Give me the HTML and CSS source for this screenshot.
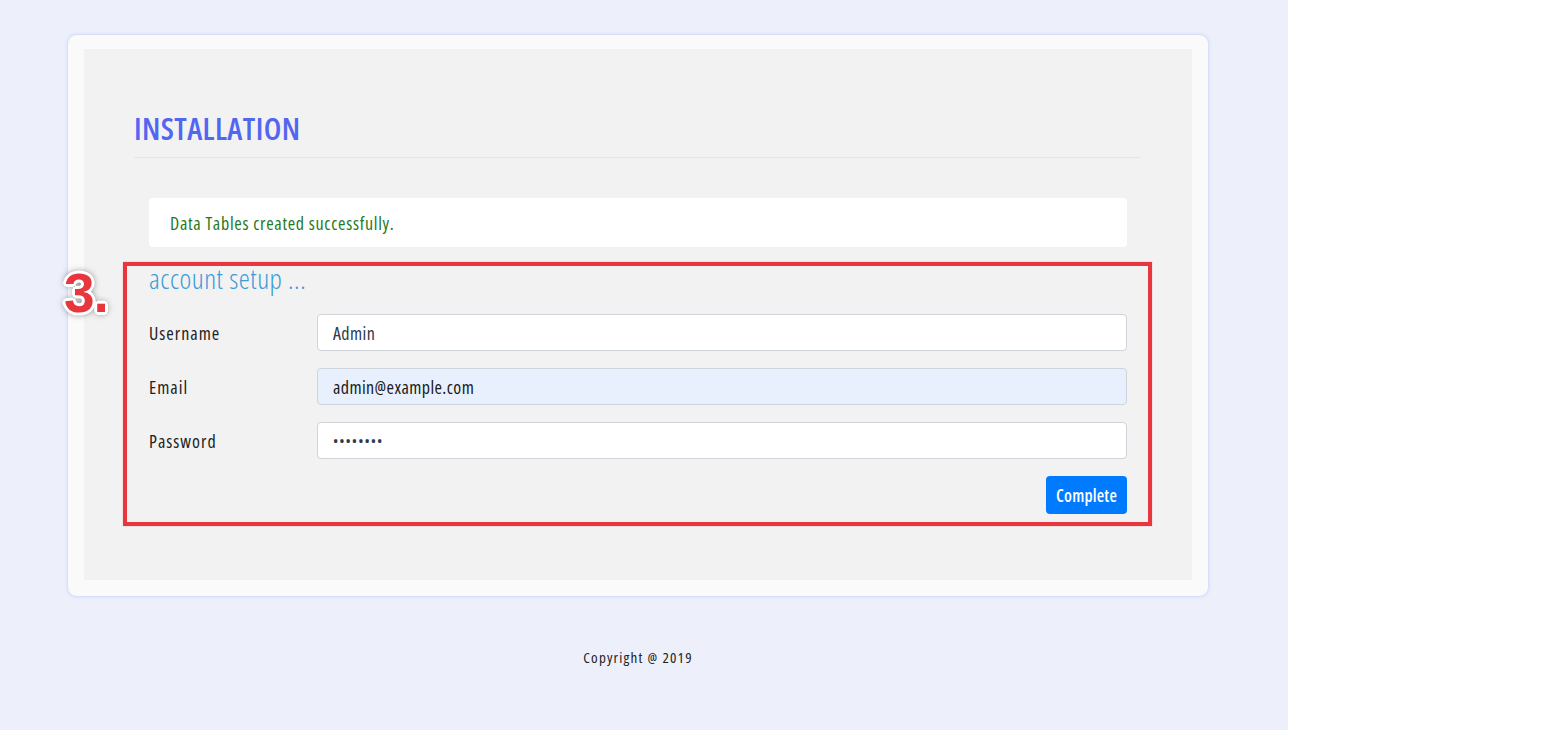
FILE: index.html
```html
<!DOCTYPE html>
<html>
<head>
<meta charset="utf-8">
<title>Installation</title>
<link rel="stylesheet" href="styles.css">
</head>
<body>
<div class="page">
  <div class="card">
    <div class="panel">
      <h1 class="title">INSTALLATION</h1>
      <hr class="rule">
      <div class="content">
        <div class="alert">Data Tables created successfully.</div>
        <form class="setup">
          <div class="annot-box"></div>
          <div class="annot-num">3.</div>
          <h2 class="setup-title">account setup ...</h2>
          <div class="row">
            <label class="label">Username</label>
            <input class="input" type="text" value="Admin">
          </div>
          <div class="row">
            <label class="label">Email</label>
            <input class="input input-filled" type="text" value="admin@example.com">
          </div>
          <div class="row">
            <label class="label">Password</label>
            <input class="input input-pass" type="password" value="password">
          </div>
          <div class="actions">
            <button class="btn" type="button">Complete</button>
          </div>
        </form>
      </div>
    </div>
  </div>
  <footer class="footer">Copyright @ 2019</footer>
</div>
</body>
</html>
```
FILE: styles.css
```css
html, body {
  margin: 0;
  padding: 0;
  background: #ffffff;
}
body {
  font-family: "Open Sans", "DejaVu Sans", sans-serif;
  font-stretch: 75%;
  color: #222;
}
.page {
  width: 1288px;
  min-height: 730px;
  background: #edf0fb;
  padding-top: 34px;
  box-sizing: border-box;
}
.card {
  margin-left: 67px;
  width: 1142px;
  height: 563px;
  box-sizing: border-box;
  background: #fafafa;
  border: 1px solid #d9dff8;
  border-radius: 10px;
  box-shadow: 0 0 3px 1px #dde3fa;
  padding: 14px 16px 15px 16px;
}
.panel {
  background: #f2f2f2;
  height: 531px;
  padding: 59px 51px 0 50px;
  box-sizing: border-box;
}
.title {
  margin: 0;
  font-size: 31px;
  line-height: 40px;
  font-weight: 600;
  color: #5266ef;
  letter-spacing: 0.4px;
}
.rule {
  margin: 9px 0 0 0;
  border: 0;
  height: 1px;
  background: #dfe4f6;
}
.content {
  padding: 40px 14px 0 15px;
}
.alert {
  background: #ffffff;
  border-radius: 4px;
  height: 49px;
  box-sizing: border-box;
  padding: 13px 21px 0 21px;
  line-height: 25px;
  font-size: 18px;
  letter-spacing: 0.7px;
  color: #1f7a22;
}
.setup {
  position: relative;
  margin: 15px 0 0 0;
  padding: 1px 0 12px 0;
}
.annot-box {
  position: absolute;
  left: -26px;
  right: -25px;
  top: 0;
  bottom: 0;
  border: 4px solid #e8363e;
  box-shadow: 0 0 1px rgba(232, 54, 62, 0.5);
  pointer-events: none;
}
.annot-num {
  position: absolute;
  left: -85px;
  top: 4px;
  font-family: "Liberation Sans", Arial, sans-serif;
  font-stretch: normal;
  font-weight: 700;
  font-size: 55px;
  line-height: 55px;
  letter-spacing: -1px;
  color: #e8363e;
  text-shadow:
    -3px 0 0 #fff, 3px 0 0 #fff, 0 -3px 0 #fff, 0 3px 0 #fff,
    -2px -2px 0 #fff, 2px -2px 0 #fff, -2px 2px 0 #fff, 2px 2px 0 #fff,
    0 0 6px rgba(0, 0, 0, 0.6), 0 0 10px rgba(0, 0, 0, 0.45);
}
.setup-title {
  margin: 0 0 21px 0;
  font-size: 28px;
  line-height: 30px;
  font-weight: 300;
  color: #3a9bd9;
  letter-spacing: 0.5px;
}
.row {
  display: grid;
  grid-template-columns: 168px 1fr;
  align-items: center;
  margin-bottom: 17px;
}
.label {
  font-size: 18px;
  letter-spacing: 1px;
  color: #222;
}
.input {
  height: 37px;
  box-sizing: border-box;
  border: 1px solid #ced4da;
  border-radius: 4px;
  background: #ffffff;
  padding: 0 15px;
  font-family: "Open Sans", "DejaVu Sans", sans-serif;
  font-stretch: 75%;
  font-size: 18px;
  letter-spacing: 0.4px;
  color: #2d3a4a;
  outline: none;
}
.input-filled {
  background: #e8f0fe;
  color: #1a1a1a;
}
.input-pass {
  letter-spacing: 1px;
  font-size: 14px;
}
.actions {
  display: flex;
  justify-content: flex-end;
}
.btn {
  height: 38px;
  width: 81px;
  border: 0;
  border-radius: 4px;
  background: #007bff;
  color: #fff;
  font-family: "Open Sans", "DejaVu Sans", sans-serif;
  font-stretch: 75%;
  font-size: 17px;
  font-weight: 600;
  letter-spacing: 0.2px;
  padding: 0;
}
.footer {
  margin-top: 50px;
  text-align: center;
  width: 1276px;
  font-size: 15px;
  line-height: 20px;
  letter-spacing: 1.2px;
  color: #222;
}
```
